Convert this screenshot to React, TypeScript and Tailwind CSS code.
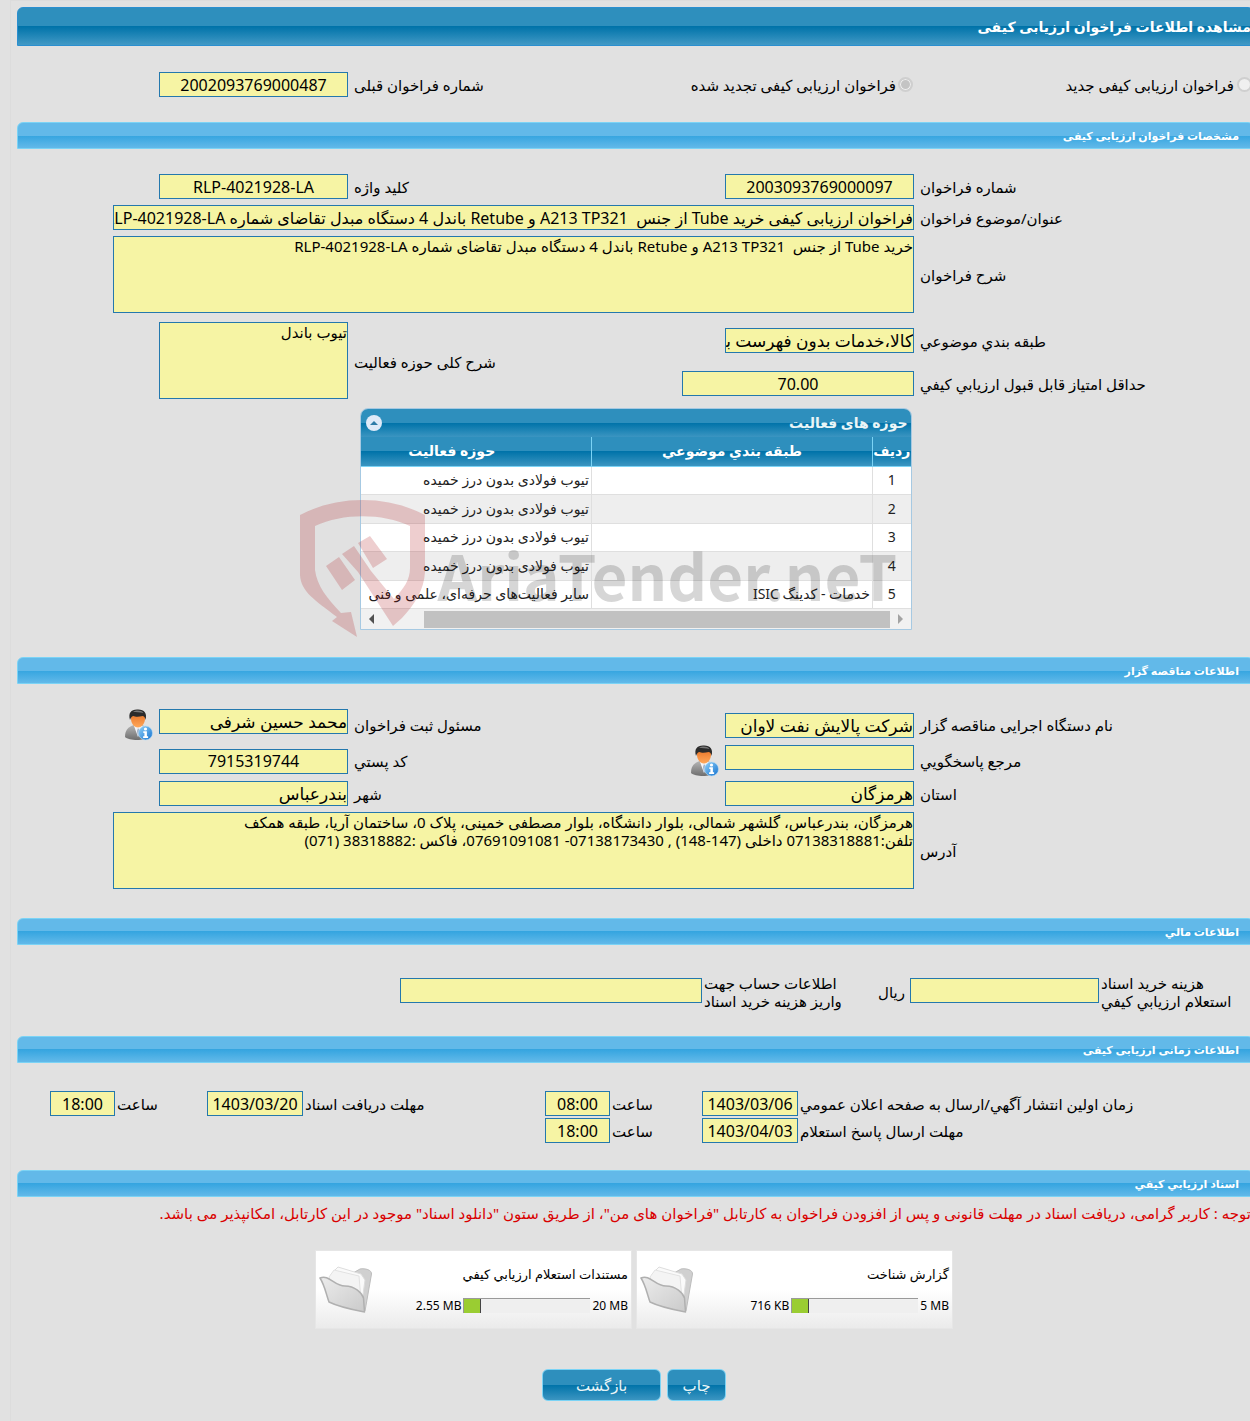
import React from 'react'

const FIELD = 'block h-[25px] border border-[#2478ad] bg-[#f6f4a4] leading-[23px] text-black outline-none'
const AREA = 'block h-[77px] resize-none overflow-hidden border border-[#2478ad] bg-[#f6f4a4] text-[15px] leading-[18px] text-black outline-none'
const TWO_COLS = 'grid grid-cols-[334fr_189px_365fr_189px_136fr] items-center gap-x-1.5'
const WIDE = 'grid grid-cols-[334fr_801fr_90fr] items-center gap-x-1.5'

interface FieldProps {
    id: string
    value?: string
    center?: boolean
    large?: boolean
    className?: string
}

function Field({ id, value = '', center, large, className = 'w-full' }: FieldProps) {
    return (
        <input
            id={id}
            readOnly
            defaultValue={value}
            className={`${FIELD} ${center ? 'text-center' : 'text-right'} ${large ? 'text-[17px]' : 'text-[16px]'} ${className}`}
        />
    )
}

function Label({ id, children }: { id: string; children: React.ReactNode }) {
    return <label htmlFor={id} className="block text-left whitespace-nowrap">{children}</label>
}

function SectionBar({ title }: { title: string }) {
    return (
        <h2 className="h-[27px] rounded-t-md border border-[#7bd3f5] bg-[linear-gradient(#62b9e9_50%,#35a5e0_50%,#62b9e9)] pr-[14px] text-[11px] leading-[26px] font-bold text-white">
            {title}
        </h2>
    )
}

function UserInfoIcon() {
    return (
        <svg viewBox="-2 0 30 32" className="h-8 w-[30px] shrink-0">
            <defs>
                <linearGradient id="suit" x1="0" y1="0" x2="0" y2="1">
                    <stop offset="0" stopColor="#b5b5b5" />
                    <stop offset="1" stopColor="#6e6e6e" />
                </linearGradient>
                <linearGradient id="face" x1="0" y1="0" x2="0" y2="1">
                    <stop offset="0" stopColor="#e8762a" />
                    <stop offset="1" stopColor="#ffa85a" />
                </linearGradient>
                <linearGradient id="badge" x1="0" y1="0" x2="1" y2="1">
                    <stop offset="0" stopColor="#8fd0f8" />
                    <stop offset="1" stopColor="#1673d0" />
                </linearGradient>
            </defs>
            <path d="M0 28C0 21 3 18 9 16L17 16C22 18 24 22 24 28C20 32 4 32 0 28Z" fill="url(#suit)" />
            <path d="M9 17L13 28L18 17Z" fill="#f2f5fa" />
            <path d="M13 19L12 22L13 28L15 22Z" fill="#9fb0c8" />
            <path d="M6 8C6 4 20 4 20 8C20.500 14 17 18.500 13 18.500C9 18.500 5.500 14 6 8Z" fill="url(#face)" />
            <path d="M5 11C3 4 6 0.500 12 0.500C19 0 22.500 4 20.500 11C20 8 19 7 17.500 7C14 8 10 8 8.500 7C7 7 6 8.500 5 11Z" fill="#2b2b2b" />
            <path d="M8 3C11 1 16 1 18.500 4C15 3 11 3 8 3Z" fill="#777" />
            <circle cx="20.500" cy="24" r="7" fill="url(#badge)" stroke="#b9ddf7" strokeWidth="0.600" />
            <circle cx="20.500" cy="20" r="1.600" fill="#fff" />
            <path d="M18.300 22.300h3.600v5h1.200v1.600h-5v-1.600h1.300v-3.400h-1.100z" fill="#fff" />
        </svg>
    )
}

function FolderIcon() {
    return (
        <svg viewBox="0 0 54 48" className="h-12 w-[54px]">
            <defs>
                <linearGradient id="folder" x1="0" y1="0" x2="1" y2="1">
                    <stop offset="0" stopColor="#ececec" />
                    <stop offset="1" stopColor="#cacaca" />
                </linearGradient>
            </defs>
            <path d="M34 7L41 3C46 2 53 4 52.500 8L46 45L36 38Z" fill="#d0d0d0" stroke="#bdbdbd" />
            <path d="M12 8L19 1L42 8L46 14L43 36L16 22Z" fill="#fafafa" stroke="#dddddd" />
            <path d="M10 11L15 4L40 10L42 34L14 24Z" fill="#f4f4f4" stroke="#e2e2e2" />
            <path d="M1 12C10 8 15 20 26 20C36 20 43 27 44.500 32L45.500 46C35 44 20 41 10 36C7 28 6 20 1 12Z" fill="url(#folder)" stroke="#b0b0b0" strokeWidth="1.500" strokeLinejoin="round" />
        </svg>
    )
}

// translucent logo over the activity table
function Watermark() {
    return (
        <div dir="ltr" className="pointer-events-none absolute -left-[60px] top-[92px] flex w-[610px] items-start">
            <svg viewBox="0 0 126 138" className="h-[138px] w-[126px] shrink-0 fill-[#a80c10]/20">
                <path d="M0 15C38 -5 87 -5 125 15V72C124 90 115 104 102 118L93 126L58 72L42 54L54 46L71 71L94 99C104 88 110 80 110 68V26C82 13 43 13 15 26V70C17 86 27 98 41 113L51 112L57 137L32 121L37 117C15 100 1 92 0 75Z" />
                <path d="M26 66L39 57L55 80L42 90ZM58 43L70 36L87 59L73 68Z" />
            </svg>
            <span className="mt-6 ml-3 font-['Noto_Sans_CJK_SC',sans-serif] text-[62px] leading-[100px] font-bold whitespace-nowrap text-black/16">
                AriaTender.neT
            </span>
        </div>
    )
}

const activities = [
    { topic: '', field: 'تیوب فولادی بدون درز خمیده' },
    { topic: '', field: 'تیوب فولادی بدون درز خمیده' },
    { topic: '', field: 'تیوب فولادی بدون درز خمیده' },
    { topic: '', field: 'تیوب فولادی بدون درز خمیده' },
    { topic: 'خدمات - كدينگ ISIC', field: 'سایر فعالیت‌های حرفه‌ای، علمی و فنی' },
]

function ActivityTable() {
    const head = 'border-b border-[#7bd3f5] bg-[linear-gradient(#2e8fbd_50%,#0073a9_50%,#3b95c1)] p-0 text-[14px] leading-[18px] font-bold text-white'
    return (
        <div className="relative mx-auto mt-1.5 w-[552px]">
            <div className="overflow-hidden rounded-t-lg border border-[#a6c9e2]">
                <div className="flex h-[28px] items-center justify-between bg-[linear-gradient(#2e8fbd_50%,#0073a9_50%,#3b95c1)] pr-[3px] pl-[5px] text-[14px] font-bold text-[#eaf5f7]">
                    <span>حوزه های فعالیت</span>
                    <button type="button" aria-label="بستن" className="flex size-4 items-center justify-center rounded-full bg-[#dfeaf8]">
                        <svg viewBox="0 0 8 4" className="h-1 w-2 fill-[#2e7ca8]"><path d="M0 4L4 0L8 4Z" /></svg>
                    </button>
                </div>
                <table className="h-[172px] w-full table-fixed border-collapse text-[14px] text-[#222]">
                    <thead>
                        <tr className="h-[29px]">
                            <th className={`${head} w-[38px]`}>ردیف</th>
                            <th className={`${head} w-[281px] border-r`}>طبقه بندي موضوعي</th>
                            <th className={`${head} border-r pr-12`}>حوزه فعالیت</th>
                        </tr>
                    </thead>
                    <tbody>
                        {activities.map((row, i) => (
                            <tr key={i} className="border-b border-[#dfdfdf] odd:bg-white even:bg-[#eeeeee]">
                                <td className="p-0 text-center">{i + 1}</td>
                                <td className="border-r border-[#dfdfdf] p-0 pr-[2px] text-right">{row.topic}</td>
                                <td className="border-r border-[#dfdfdf] p-0 pr-[2px] text-right whitespace-nowrap">{row.field}</td>
                            </tr>
                        ))}
                    </tbody>
                </table>
                <div className="flex h-[20px] items-center bg-[#f1f1f1]">
                    <svg viewBox="0 0 21 10" className="h-2.5 w-[21px] fill-[#a3a3a3]"><path d="M8 0L13 5L8 10Z" /></svg>
                    <div className="h-[17px] w-[466px] bg-[#c1c1c1]" />
                    <svg viewBox="0 0 21 10" className="mr-auto h-2.5 w-[21px] fill-[#505050]"><path d="M13 0L8 5L13 10Z" /></svg>
                </div>
            </div>
            <Watermark />
        </div>
    )
}

interface DateTimeProps {
    id: string
    label: string
    date: string
    time: string
    labelClass: string
}

function DateTime({ id, label, date, time, labelClass }: DateTimeProps) {
    return (
        <>
            <div className={`${labelClass} shrink`}><Label id={id}>{label}</Label></div>
            <Field id={id} value={date} center className="w-[96px]" />
            <div className="w-[88px] shrink"><Label id={`${id}-time`}>ساعت</Label></div>
            <Field id={`${id}-time`} value={time} center className="w-[65px]" />
        </>
    )
}

interface DocCardProps {
    title: string
    used: string
    total: string
}

function DocCard({ title, used, total }: DocCardProps) {
    return (
        <article className="flex h-[79px] w-[317px] items-center justify-between border border-[#e6e6e6] bg-[linear-gradient(#ffffff_50%,#ebebeb)] pr-[3px] pl-[3px]">
            <div className="text-[12px] leading-[16px]">
                <h3 className="text-[13px] leading-[16px]">{title}</h3>
                <div className="mt-4 flex items-center gap-0.5">
                    <span dir="ltr">{total}</span>
                    <div dir="ltr" className="h-[15px] w-[127px] border-t border-l border-[#999] bg-[#efefef]">
                        <div className="h-full w-[17px] border-r border-[#444] bg-[#9acd32]" />
                    </div>
                    <span dir="ltr">{used}</span>
                </div>
            </div>
            <FolderIcon />
        </article>
    )
}

function App() {
    const button = 'h-[32px] rounded-md border border-[#7bd3f5] bg-[linear-gradient(#2e8fbd_50%,#0073a9_50%,#3b95c1)] text-[15px] text-[#eaf5f7]'
    return (
        <div dir="rtl" className="min-h-screen overflow-hidden bg-[#e1e1e1] pl-[10px] font-['Noto_Sans','DejaVu_Sans',sans-serif] text-[15px] leading-[18px] text-black">
            <main className="-mr-1 min-h-screen border-t border-l border-[#dcdcdc] pt-1.5 pb-5 pl-1.5">
                <h1 className="h-[39px] rounded-t-md border border-[#2a8fd0] bg-[linear-gradient(#2e8fbd_50%,#0073a9_50%,#4199c5)] pr-[2px] text-[14px] leading-[37px] font-bold text-white">
                    مشاهده اطلاعات فراخوان ارزیابی کیفی
                </h1>

                <div className="mt-[26px] grid grid-cols-[341fr_565fr_189px_142fr] items-center">
                    <label className="flex items-center gap-[3px] pr-[2px]">
                        <input type="radio" name="kind" disabled className="size-[15px] appearance-none rounded-full border-2 border-[#cfcfcf] bg-[#f0f0f0]" />
                        فراخوان ارزیابی کیفی جدید
                    </label>
                    <div className="flex items-center justify-between pl-1.5">
                        <label className="flex items-center gap-[2px]">
                            <input type="radio" name="kind" disabled defaultChecked className="size-[15px] appearance-none rounded-full border-2 border-[#cfcfcf] bg-[#c4c4c4] shadow-[inset_0_0_0_1px_#f0f0f0]" />
                            فراخوان ارزیابی کیفی تجدید شده
                        </label>
                        <Label id="prev">شماره فراخوان قبلی</Label>
                    </div>
                    <Field id="prev" value="2002093769000487" center />
                </div>

                <section className="mt-[25px]">
                    <SectionBar title="مشخصات فراخوان ارزیابی کیفی" />
                    <div className="mt-[25px] flex flex-col gap-1.5">
                        <div className={TWO_COLS}>
                            <Label id="number">شماره فراخوان</Label>
                            <Field id="number" value="2003093769000097" center />
                            <Label id="keyword">کلید واژه</Label>
                            <Field id="keyword" value="RLP-4021928-LA" center />
                        </div>
                        <div className={WIDE}>
                            <Label id="subject">عنوان/موضوع فراخوان</Label>
                            <Field id="subject" value="فراخوان ارزیابی کیفی خرید Tube از جنس  A213 TP321 و Retube باندل 4 دستگاه مبدل تقاضای شماره RLP-4021928-LA" />
                        </div>
                        <div className={WIDE}>
                            <Label id="desc">شرح فراخوان</Label>
                            <textarea id="desc" readOnly className={AREA} defaultValue="خرید Tube از جنس  A213 TP321 و Retube باندل 4 دستگاه مبدل تقاضای شماره RLP-4021928-LA" />
                        </div>
                    </div>
                    <div className={`${TWO_COLS} mt-[9px] grid-rows-[37px_37px] gap-y-1.5`}>
                        <Label id="category">طبقه بندي موضوعي</Label>
                        <Field id="category" large value="کالا،خدمات بدون فهرست بها" />
                        <div className="col-start-3 row-span-2 row-start-1"><Label id="scope">شرح کلی حوزه فعالیت</Label></div>
                        <textarea id="scope" readOnly className={`${AREA} row-span-2 self-start`} defaultValue="تیوب باندل" />
                        <div className="col-start-1 row-start-2"><Label id="score">حداقل امتياز قابل قبول ارزيابي کيفي</Label></div>
                        <div className="col-start-2 row-start-2"><Field id="score" value="70.00" center className="w-[232px]" /></div>
                    </div>
                    <ActivityTable />
                </section>

                <section className="mt-[27px]">
                    <SectionBar title="اطلاعات مناقصه گزار" />
                    <div className="mt-6 flex flex-col">
                        <div className={`${TWO_COLS} h-[34px]`}>
                            <Label id="org">نام دستگاه اجرایی مناقصه گزار</Label>
                            <Field id="org" large value="شرکت پالایش نفت لاوان" />
                            <Label id="registrar">مسئول ثبت فراخوان</Label>
                            <Field id="registrar" large value="محمد حسین شرفی" className="mb-2 w-full" />
                            <UserInfoIcon />
                        </div>
                        <div className={`${TWO_COLS} mt-0.5 h-[34px]`}>
                            <Label id="contact">مرجع پاسخگويي</Label>
                            <Field id="contact" className="mb-2 w-full" />
                            <div className="flex items-center justify-between">
                                <UserInfoIcon />
                                <Label id="postal">کد پستي</Label>
                            </div>
                            <Field id="postal" value="7915319744" center />
                        </div>
                        <div className={`${TWO_COLS} mt-[3px]`}>
                            <Label id="province">استان</Label>
                            <Field id="province" large value="هرمزگان" />
                            <Label id="city">شهر</Label>
                            <Field id="city" large value="بندرعباس" />
                        </div>
                        <div className={`${WIDE} mt-1.5`}>
                            <Label id="address">آدرس</Label>
                            <textarea
                                id="address"
                                readOnly
                                className={AREA}
                                defaultValue={'هرمزگان، بندرعباس، گلشهر شمالی، بلوار دانشگاه، بلوار مصطفی خمینی، پلاک 0، ساختمان آریا، طبقه همکف\nتلفن:07138318881 داخلی (147-148) , 07138173430- 07691091081، فاکس :38318882 (071)'}
                            />
                        </div>
                    </div>
                </section>

                <section className="mt-[29px]">
                    <SectionBar title="اطلاعات مالي" />
                    <div className="mt-[29px] flex items-center">
                        <label htmlFor="price" className="w-[153px] text-left">هزينه خريد اسناد<br />استعلام ارزيابي کيفي</label>
                        <Field id="price" className="mr-0.5 mb-1 w-[189px]" />
                        <span className="mr-[5px] w-[63px]">ريال</span>
                        <label htmlFor="account" className="w-[138px] text-left">اطلاعات حساب جهت<br />واريز هزينه خريد اسناد</label>
                        <Field id="account" className="mr-0.5 mb-1 w-[302px]" />
                    </div>
                </section>

                <section className="mt-[26px]">
                    <SectionBar title="اطلاعات زمانی ارزیابی کیفی" />
                    <div className="mt-7 flex flex-col gap-0.5">
                        <div className="flex items-center gap-0.5">
                            <DateTime id="publish" label="زمان اولين انتشار آگهي/ارسال به صفحه اعلان عمومي" date="1403/03/06" time="08:00" labelClass="w-[454px]" />
                            <DateTime id="receive" label="مهلت دریافت اسناد" date="1403/03/20" time="18:00" labelClass="w-[238px]" />
                        </div>
                        <div className="flex items-center gap-0.5">
                            <DateTime id="reply" label="مهلت ارسال پاسخ استعلام" date="1403/04/03" time="18:00" labelClass="w-[454px]" />
                        </div>
                    </div>
                </section>

                <section className="mt-[27px]">
                    <SectionBar title="اسناد ارزيابي کيفي" />
                    <p className="mt-[7px] pr-[3px] whitespace-nowrap text-[#d90000]">
                        توجه : کاربر گرامی، دریافت اسناد در مهلت قانونی و پس از افزودن فراخوان به کارتابل "فراخوان های من"، از طریق ستون "دانلود اسناد" موجود در این کارتابل، امکانپذیر می باشد.
                    </p>
                    <div className="mt-7 flex justify-center gap-1 pr-[3px]">
                        <DocCard title="گزارش شناخت" used="716 KB" total="5 MB" />
                        <DocCard title="مستندات استعلام ارزيابي کيفي" used="2.55 MB" total="20 MB" />
                    </div>
                    <div className="mt-10 flex justify-center gap-1.5 pr-[3px]">
                        <button type="button" className={`${button} w-[59px]`}>چاپ</button>
                        <button type="button" className={`${button} w-[119px]`}>بازگشت</button>
                    </div>
                </section>
            </main>
        </div>
    )
}

export default App
